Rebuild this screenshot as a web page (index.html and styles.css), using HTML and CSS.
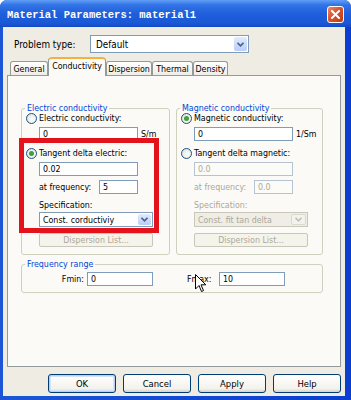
FILE: index.html
```html
<!DOCTYPE html>
<html lang="en">
  <head>
    <meta charset="UTF-8" />
    <title>Material Parameters</title>
    <link rel="stylesheet" href="styles.css">
  </head>
  <body>
    <div class="window">
      <div class="titlebar">
        <span class="title">Material Parameters: material1</span>
        <span class="close">
          <svg width="9" height="9" viewBox="0 0 9 9"><path d="M1 1 L8 8 M8 1 L1 8" stroke="#fff" stroke-width="2" stroke-linecap="square" fill="none"/></svg>
        </span>
      </div>
      <div class="client">
        <div class="problem-row">
          <span class="problem-label">Problem type:</span>
          <div class="combo problem-combo">
            <span class="combo-text">Default</span>
            <span class="combo-arrow"><svg width="7" height="5" viewBox="0 0 7 5"><path d="M0.5 0.8 L3.5 3.8 L6.5 0.8" stroke="#4d6185" stroke-width="1.6" fill="none"/></svg></span>
          </div>
        </div>

        <div class="tabs">
          <span class="tab tab-general">General</span>
          <span class="tab tab-active tab-cond">Conductivity</span>
          <span class="tab tab-disp">Dispersion</span>
          <span class="tab tab-thermal">Thermal</span>
          <span class="tab tab-density">Density</span>
        </div>

        <div class="panel">
          <div class="groups">
            <fieldset class="group">
              <legend>Electric conductivity</legend>
              <div class="opt"><span class="radio"></span>Electric conductivity:</div>
              <div class="field first"><span class="edit wide">0</span><span class="unit">S/m</span></div>
              <div class="opt second"><span class="radio checked"></span>Tangent delta electric:</div>
              <div class="field first"><span class="edit wide">0.02</span></div>
              <div class="field freq"><span class="freq-label">at frequency:</span><span class="edit short">5</span></div>
              <div class="spec">Specification:</div>
              <div class="field sel"><div class="combo spec-combo"><span class="combo-text">Const. corductiviy</span><span class="combo-arrow"><svg width="7" height="5" viewBox="0 0 7 5"><path d="M0.5 0.8 L3.5 3.8 L6.5 0.8" stroke="#4d6185" stroke-width="1.6" fill="none"/></svg></span></div></div>
              <div class="field btnrow"><span class="btn-disabled">Dispersion List...</span></div>
            </fieldset>

            <fieldset class="group">
              <legend>Magnetic conductivity</legend>
              <div class="opt"><span class="radio checked"></span>Magnetic conductivity:</div>
              <div class="field first"><span class="edit wide">0</span><span class="unit">1/Sm</span></div>
              <div class="opt second"><span class="radio"></span>Tangent delta magnetic:</div>
              <div class="field first"><span class="edit wide off">0.0</span></div>
              <div class="field freq off-text"><span class="freq-label">at frequency:</span><span class="edit short off">0.0</span></div>
              <div class="spec off-text">Specification:</div>
              <div class="field sel"><div class="combo spec-combo combo-off"><span class="combo-text">Const. fit tan delta</span><span class="combo-arrow"><svg width="7" height="5" viewBox="0 0 7 5"><path d="M0.5 0.8 L3.5 3.8 L6.5 0.8" stroke="#c3c0b4" stroke-width="1.6" fill="none"/></svg></span></div></div>
              <div class="field btnrow"><span class="btn-disabled">Dispersion List...</span></div>
            </fieldset>
          </div>

          <fieldset class="group range">
            <legend>Frequency range</legend>
            <div class="range-row">
              <span class="range-label">Fmin:</span><span class="edit range-edit">0</span>
              <span class="range-label max">Fmax:</span><span class="edit range-edit">10</span>
            </div>
          </fieldset>
        </div>

        <div class="buttons">
          <span class="btn default">OK</span>
          <span class="btn">Cancel</span>
          <span class="btn">Apply</span>
          <span class="btn">Help</span>
        </div>
      </div>

      <!-- red annotation box and mouse pointer lie over the dialog -->
      <div class="mark"></div>
      <svg class="pointer" width="12" height="19" viewBox="0 0 12 19">
        <path d="M0.5 0.5 L0.5 15 L4 11.5 L6.5 17.5 L8.5 16.6 L6 10.8 L10.8 10.8 Z" fill="#fff" stroke="#000" stroke-width="1"/>
      </svg>
    </div>
  </body>
</html>
```

FILE: styles.css
```css
body {
  margin: 0;
  background: #fff;
}
.window {
  position: relative;
  width: 351px;
  height: 400px;
  background: linear-gradient(90deg, #1c55d6, #0a3fcf);
  border-radius: 7px 7px 0 0;
  overflow: hidden;
  font-family: "DejaVu Sans Condensed", "Liberation Sans", sans-serif;
  font-stretch: condensed;
  font-size: 8.8px;
  color: #000;
}
.titlebar {
  height: 27px;
  display: flex;
  align-items: center;
  justify-content: space-between;
  padding: 0 7px 0 7px;
  box-sizing: border-box;
  background: linear-gradient(#629ff6 0%, #3274e6 18%, #1f5fdc 50%, #1a58d6 85%, #134ac6 100%);
}
.title {
  font-family: "Liberation Mono", monospace;
  font-weight: bold;
  font-size: 10.5px;
  color: #fff;
  margin-top: 2px;
}
.close {
  width: 17px;
  height: 17px;
  box-sizing: border-box;
  border: 1px solid #fff;
  border-radius: 3px;
  background: linear-gradient(135deg, #ee8a6a, #d9532d 45%, #c23a12);
  display: flex;
  align-items: center;
  justify-content: center;
  margin-top: 2px;
}
.client {
  margin: 0 6px 0 3px;
  height: 369px;
  background: #eeece3;
  overflow: hidden;
}

/* top row */
.problem-row {
  display: flex;
  align-items: center;
  padding: 8px 0 0 11px;
}
.problem-label {
  width: 76px;
  font-size: 9.8px;
}
.combo {
  display: flex;
  box-sizing: border-box;
  border: 1px solid #7f9db9;
  background: #fff;
  align-items: stretch;
}
.problem-combo {
  width: 159px;
  height: 18px;
  font-size: 9.8px;
}
.combo-text {
  flex: 1;
  padding-left: 5px;
  display: flex;
  align-items: center;
  white-space: nowrap;
  overflow: hidden;
}
.combo-arrow {
  width: 13px;
  margin: 1px;
  border-radius: 2px;
  background: linear-gradient(#e2ebfd, #b9cdf8);
  display: flex;
  align-items: center;
  justify-content: center;
}

/* tabs */
.tabs {
  display: flex;
  align-items: flex-end;
  height: 18px;
  margin: 4px 0 0 7px;
  position: relative;
  z-index: 1;
}
.tab {
  box-sizing: border-box;
  height: 14px;
  border: 1px solid #919b9c;
  border-bottom: none;
  border-radius: 3px 3px 0 0;
  background: linear-gradient(#ffffff, #eeede6);
  display: flex;
  align-items: center;
  justify-content: center;
}
.tab-general { width: 38px; }
.tab-cond { width: 58px; }
.tab-disp { width: 46px; }
.tab-thermal { width: 41px; }
.tab-density { width: 35px; }
.tab-active {
  height: 19px;
  margin-bottom: -1px;
  border-top: 2px solid #f5b040;
  border-radius: 4px 4px 0 0;
  background: #fbfaf7;
  align-items: flex-start;
  padding-top: 2px;
}

/* page */
.panel {
  margin-left: 4px;
  width: 334px;
  height: 292px;
  box-sizing: border-box;
  border: 1px solid #919b9c;
  background: #fbfaf7;
  padding: 26px 17px 0 13px;
}
.groups {
  display: flex;
  gap: 6px;
}
.group {
  margin: 0;
  min-width: 0;
  border: 1px solid #d0d0bf;
  border-radius: 3px;
  padding: 0 4px 7px 4px;
}
.groups .group:first-child { width: 150px; box-sizing: border-box; }
.groups .group:last-child { width: 148px; box-sizing: border-box; }
.group legend {
  color: #0046d5;
  line-height: 12px;
  padding: 0 2px;
  margin-left: -1px;
}
.opt {
  display: flex;
  align-items: center;
  height: 12px;
  margin-top: -2px;
  white-space: nowrap;
}
.opt.second {
  margin-top: 6px;
}
.radio {
  width: 11px;
  height: 11px;
  box-sizing: border-box;
  border: 1px solid #1c5180;
  border-radius: 50%;
  background: radial-gradient(circle at 60% 60%, #ffffff, #dcdcd4);
  margin-right: 2px;
  display: flex;
  align-items: center;
  justify-content: center;
}
.radio.checked::after {
  content: "";
  width: 5px;
  height: 5px;
  border-radius: 50%;
  background: #3aa53a;
}
.field {
  display: flex;
  align-items: center;
  padding-left: 13px;
}
.field.first { margin-top: 3px; }
.field.freq { margin-top: 4px; }
.field.sel { margin-top: 1px; }
.field.btnrow { margin-top: 6px; }
.edit {
  box-sizing: border-box;
  height: 14px;
  border: 1px solid #7f9db9;
  background: #fff;
  padding-left: 3px;
  display: flex;
  align-items: center;
}
.edit.wide { width: 99px; }
.edit.short { width: 39px; }
.edit.off {
  border-color: #b5c3d3;
  color: #aca899;
  background: #fbfbf8;
}
.unit {
  margin-left: 3px;
}
.freq-label {
  width: 60px;
  white-space: nowrap;
}
.spec {
  height: 12px;
  margin-top: 5px;
  padding-left: 13px;
  display: flex;
  align-items: center;
}
.off-text {
  color: #aca899;
}
.spec-combo {
  width: 114px;
  height: 15px;
}
.spec-combo .combo-text {
  padding-left: 3px;
}
.combo-off {
  background: #efede5;
  border-color: #c9c7ba;
  color: #aca899;
}
.combo-off .combo-arrow {
  background: #f3f2ec;
  border: 1px solid #dcdad0;
}
.btn-disabled {
  box-sizing: border-box;
  width: 114px;
  height: 14px;
  border: 1px solid #c9c7ba;
  border-radius: 2px;
  background: #f5f4ea;
  color: #aca899;
  display: flex;
  align-items: center;
  justify-content: center;
}

/* frequency range */
.group.range {
  margin-top: 3px;
  width: 302px;
  box-sizing: border-box;
  padding-bottom: 6px;
}
.range-row {
  display: flex;
  align-items: center;
  margin-top: 2px;
}
.range-label {
  width: 58px;
  text-align: right;
  margin-right: 3px;
}
.range-label.max {
  width: 29px;
  text-align: left;
  margin-left: 34px;
}
.range-edit {
  width: 66px;
}

/* dialog buttons */
.buttons {
  display: flex;
  justify-content: flex-end;
  gap: 7px;
  margin-top: 7px;
  padding-right: 4px;
}
.btn {
  box-sizing: border-box;
  width: 68px;
  height: 19px;
  border: 1px solid #003c74;
  border-radius: 3px;
  background: linear-gradient(#ffffff, #f3f2ec 80%, #d8d3c8);
  display: flex;
  align-items: center;
  justify-content: center;
  font-size: 9.4px;
}
.btn.default {
  box-shadow: inset 0 0 0 1px #b9d0f5, inset 0 0 0 2px #d6e2f8;
}

/* overlays */
.mark {
  position: absolute;
  left: 19px;
  top: 138px;
  width: 140px;
  height: 95px;
  box-sizing: border-box;
  border: 5px solid #e3121b;
}
.pointer {
  position: absolute;
  left: 195px;
  top: 274px;
}
```
